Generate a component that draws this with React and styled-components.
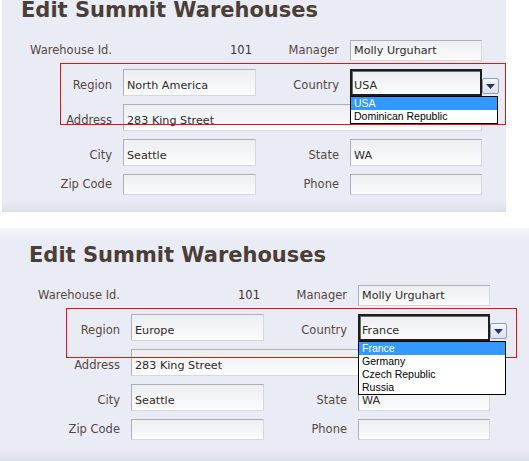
import React from "react";
import styled, { createGlobalStyle } from "styled-components";

const GlobalStyle = createGlobalStyle`
  html, body { margin: 0; padding: 0; background: #ffffff; }
  body { font-family: "DejaVu Sans", Verdana, sans-serif; }
`;

const Page = styled.div`
  width: 529px;
  height: 461px;
  overflow: hidden;
  display: flex;
  flex-direction: column;
  gap: 16px;
`;

const Panel = styled.section`
  position: relative;
  flex: 0 0 auto;
  box-sizing: border-box;
  margin-left: ${(p) => p.$inset}px;
  width: ${(p) => p.$width}px;
  height: ${(p) => p.$height}px;
  padding: 15px 0 0 ${(p) => p.$padLeft}px;
  overflow: hidden;
  background: linear-gradient(
    to bottom,
    ${(p) => (p.$topFade ? "#f3f5f9 0px, #e9ecf4 12px" : "#e9ecf4 0px")},
    #e9ecf4 calc(100% - 11px),
    #dbdfe8 100%
  );
`;

const Title = styled.h1`
  margin: ${(p) => -p.$shift}px 0 18px;
  font-family: "DejaVu Sans", Verdana, sans-serif;
  font-weight: 700;
  font-size: 21px;
  line-height: 24px;
  color: #4b3e36;
  white-space: nowrap;
`;

const Form = styled.div`
  display: grid;
  grid-template-columns: 91px 133px 72px 132px;
  column-gap: 11px;
  row-gap: 8px;
  align-items: end;
`;

const Label = styled.span`
  text-align: right;
  font-size: 11.5px;
  line-height: 21px;
  color: #56483f;
  white-space: nowrap;
`;

const Value = styled.span`
  text-align: right;
  padding-right: 4px;
  font-size: 11.5px;
  line-height: 21px;
  color: #3a3330;
`;

const Field = styled.div`
  box-sizing: border-box;
  height: ${(p) => (p.$tall ? 27 : 21)}px;
  padding: ${(p) => (p.$tall ? 6 : 0)}px 3px 0;
  grid-column: ${(p) => (p.$span ? `span ${p.$span}` : "auto")};
  border: 1px solid;
  border-color: #adb0b8 #d5d8de #d5d8de #adb0b8;
  background: linear-gradient(to bottom, #eceef1, #fbfcfc);
  font-size: 11.2px;
  line-height: 19px;
  color: #2f2b29;
  white-space: nowrap;
`;

const SelectCell = styled.div`
  position: relative;
  display: flex;
  align-items: flex-end;
  height: 27px;
`;

const SelectBox = styled.div`
  box-sizing: border-box;
  flex: 0 0 132px;
  height: 27px;
  padding: 7px 2px 0;
  border: 2px solid #1d1d1d;
  box-shadow: inset 1px 1px 0 #6b6b6b;
  background: linear-gradient(to bottom, #eceef1, #fbfcfc);
  font-size: 11.2px;
  line-height: 16px;
  color: #2f2b29;
  white-space: nowrap;
`;

const ArrowButton = styled.div`
  box-sizing: border-box;
  flex: 0 0 17px;
  height: 16px;
  margin-bottom: 2px;
  border: 1px solid #8e9dbd;
  border-radius: 2px;
  background: linear-gradient(to bottom, #f5f6f9, #dde1e8);
  display: flex;
  align-items: center;
  justify-content: center;
`;

const OptionList = styled.ul`
  position: absolute;
  top: 27px;
  left: 0;
  z-index: 2;
  box-sizing: border-box;
  width: 148px;
  margin: 0;
  padding: 0;
  list-style: none;
  border: 1px solid #000000;
  background: #ffffff;
  font-family: "Liberation Sans", Arial, sans-serif;
  font-size: 10.5px;
`;

const Option = styled.li`
  height: 13px;
  line-height: 13px;
  padding-left: 3px;
  white-space: nowrap;
  color: ${(p) => (p.$selected ? "#ffffff" : "#000000")};
  background: ${(p) => (p.$selected ? "#3399ff" : "transparent")};
`;

const Callout = styled.div`
  position: absolute;
  z-index: 1;
  box-sizing: border-box;
  left: ${(p) => p.$x}px;
  top: ${(p) => p.$y}px;
  width: ${(p) => p.$w}px;
  height: ${(p) => p.$h}px;
  border: 1px solid #e21515;
  pointer-events: none;
`;

const Caret = () => (
  <svg width="9" height="5" viewBox="0 0 9 5" aria-hidden="true">
    <polygon points="0,0 9,0 4.5,5" fill="#27346a" />
  </svg>
);

const CountrySelect = ({ value, options }) => (
  <SelectCell>
    <SelectBox>{value}</SelectBox>
    <ArrowButton>
      <Caret />
    </ArrowButton>
    <OptionList>
      {options.map((o) => (
        <Option key={o} $selected={o === value}>
          {o}
        </Option>
      ))}
    </OptionList>
  </SelectCell>
);

const WarehouseForm = ({ form, panel }) => (
  <Panel
    $inset={panel.inset}
    $width={panel.width}
    $height={panel.height}
    $padLeft={panel.padLeft}
    $topFade={panel.topFade}
  >
    <Title $shift={panel.shift}>Edit Summit Warehouses</Title>
    <Form>
      <Label>Warehouse Id.</Label>
      <Value>101</Value>
      <Label>Manager</Label>
      <Field>Molly Urguhart</Field>

      <Label>Region</Label>
      <Field $tall>{form.region}</Field>
      <Label>Country</Label>
      <CountrySelect value={form.country} options={form.countries} />

      <Label>Address</Label>
      <Field $tall $span={3}>
        283 King Street
      </Field>

      <Label>City</Label>
      <Field $tall>Seattle</Field>
      <Label>State</Label>
      <Field $tall>WA</Field>

      <Label>Zip Code</Label>
      <Field />
      <Label>Phone</Label>
      <Field />
    </Form>
    <Callout
      $x={panel.callout.x}
      $y={panel.callout.y}
      $w={panel.callout.w}
      $h={panel.callout.h}
    />
  </Panel>
);

const views = [
  {
    form: {
      region: "North America",
      country: "USA",
      countries: ["USA", "Dominican Republic"],
    },
    panel: {
      inset: 2,
      width: 504,
      height: 212,
      padLeft: 19,
      shift: 17,
      topFade: false,
      callout: { x: 58, y: 63, w: 446, h: 62 },
    },
  },
  {
    form: {
      region: "Europe",
      country: "France",
      countries: ["France", "Germany", "Czech Republic", "Russia"],
    },
    panel: {
      inset: 0,
      width: 529,
      height: 233,
      padLeft: 29,
      shift: 0,
      topFade: true,
      callout: { x: 66, y: 80, w: 451, h: 50 },
    },
  },
];

export default function App() {
  return (
    <>
      <GlobalStyle />
      <Page>
        {views.map((v, i) => (
          <WarehouseForm key={i} form={v.form} panel={v.panel} />
        ))}
      </Page>
    </>
  );
}
